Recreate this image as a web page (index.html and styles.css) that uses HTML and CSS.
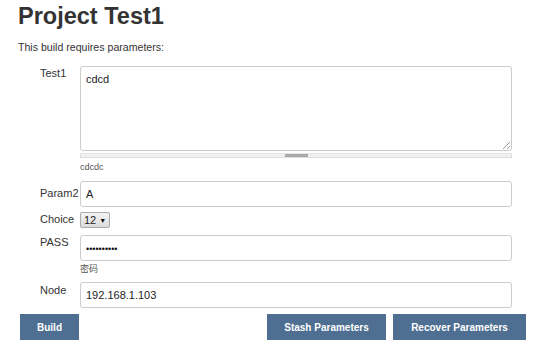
FILE: index.html
```html
<!DOCTYPE html>
<html>
<head>
<meta charset="utf-8">
<link rel="stylesheet" href="styles.css">
</head>
<body>
<div class="page">
  <h1 class="title">Project Test1</h1>
  <p class="intro">This build requires parameters:</p>
  <div class="form">
    <div class="row row-test1">
      <div class="label">Test1</div>
      <div class="field">
        <div class="textarea">cdcd<span class="grip"></span></div>
        <div class="handle"><span class="thumb"></span></div>
        <div class="desc">cdcdc</div>
      </div>
    </div>
    <div class="row row-param2">
      <div class="label">Param2</div>
      <div class="field"><div class="input">A</div></div>
    </div>
    <div class="row row-choice">
      <div class="label">Choice</div>
      <div class="field"><div class="select">12 <span class="caret">&#9660;</span></div></div>
    </div>
    <div class="row row-pass">
      <div class="label">PASS</div>
      <div class="field">
        <div class="input dots">&bull;&bull;&bull;&bull;&bull;&bull;&bull;&bull;&bull;&bull;</div>
        <div class="desc desc-cjk">密码</div>
      </div>
    </div>
    <div class="row row-node">
      <div class="label">Node</div>
      <div class="field"><div class="input">192.168.1.103</div></div>
    </div>
  </div>
  <div class="buttons">
    <button class="btn btn-build">Build</button>
    <div class="spacer"></div>
    <button class="btn btn-stash">Stash Parameters</button>
    <button class="btn btn-recover">Recover Parameters</button>
  </div>
</div>
</body>
</html>
```
FILE: styles.css
```css
html, body {
  margin: 0;
  padding: 0;
  background: #fff;
}
body {
  font-family: "Liberation Sans", Arial, sans-serif;
  color: #333;
  font-size: 11px;
}
.page {
  width: 533px;
  height: 351px;
  overflow: hidden;
  box-sizing: border-box;
  padding: 0 0 0 18px;
}
.title {
  margin: 0;
  padding-top: 3px;
  font-size: 23.5px;
  line-height: 26px;
  font-weight: bold;
  color: #333;
}
.intro {
  margin: 12px 0 0 0;
  font-size: 10.6px;
  line-height: 13px;
  color: #333;
}
.form {
  margin-top: 12px;
  padding-left: 22px;
}
.row {
  display: flex;
}
.label {
  width: 40px;
  flex: none;
  font-size: 11px;
  line-height: 13px;
  color: #333;
}
.field {
  width: 432px;
}
.textarea {
  position: relative;
  box-sizing: border-box;
  height: 85px;
  border: 1px solid #ccc;
  border-radius: 3px;
  padding: 6px 5px;
  font-size: 11px;
  line-height: 13px;
  color: #222;
}
.grip {
  position: absolute;
  right: 1px;
  bottom: 1px;
  width: 7px;
  height: 7px;
  background: linear-gradient(135deg, transparent 45%, #999 45%, #999 52%, transparent 52%, transparent 72%, #999 72%, #999 80%, transparent 80%);
}
.handle {
  margin-top: 2px;
  height: 5px;
  box-sizing: border-box;
  border: 1px solid #ddd;
  border-top-color: #e4e4e4;
  background: #f1f1f1;
  display: flex;
  justify-content: center;
  align-items: center;
}
.thumb {
  width: 23px;
  height: 3px;
  background: #aaa;
}
.desc {
  margin-top: 4px;
  font-size: 9px;
  line-height: 11px;
  color: #555;
}
.desc-cjk {
  font-family: "Noto Sans CJK SC", "Liberation Sans", sans-serif;
  margin-top: 2px;
  line-height: 12px;
}
.input {
  box-sizing: border-box;
  height: 26px;
  border: 1px solid #ccc;
  border-radius: 3px;
  padding: 0 5px;
  display: flex;
  align-items: center;
  font-size: 11px;
  color: #222;
}
.dots {
  font-size: 9px;
  letter-spacing: 0;
  padding-top: 1px;
  color: #111;
}
.row-test1 .label { padding-top: 1px; }
.row-param2 { margin-top: 8px; }
.row-param2 .label { padding-top: 6px; }
.row-choice { margin-top: 5px; }
.row-choice .label { padding-top: 1px; }
.select {
  box-sizing: border-box;
  width: 30px;
  height: 16px;
  border: 1px solid #aaa;
  border-radius: 2px;
  background: linear-gradient(#f4f4f4, #dcdcdc);
  font-size: 11px;
  line-height: 14px;
  padding-left: 3px;
  color: #222;
}
.caret {
  font-size: 7px;
  vertical-align: 1px;
  color: #111;
}
.row-pass { margin-top: 7px; }
.row-pass .label { padding-top: 1px; }
.row-node { margin-top: 7px; }
.row-node .label { padding-top: 2px; }
.buttons {
  display: flex;
  margin-top: 6px;
  padding-left: 2px;
  width: 506px;
  gap: 7px;
}
.spacer { flex: 1; }
.btn {
  height: 26px;
  border: none;
  background: #4e6f91;
  color: #fff;
  font-family: "Liberation Sans", Arial, sans-serif;
  font-weight: bold;
  font-size: 10px;
  padding: 0;
}
.btn-build { width: 59px; }
.btn-stash { width: 119px; }
.btn-recover { width: 133px; }
```
